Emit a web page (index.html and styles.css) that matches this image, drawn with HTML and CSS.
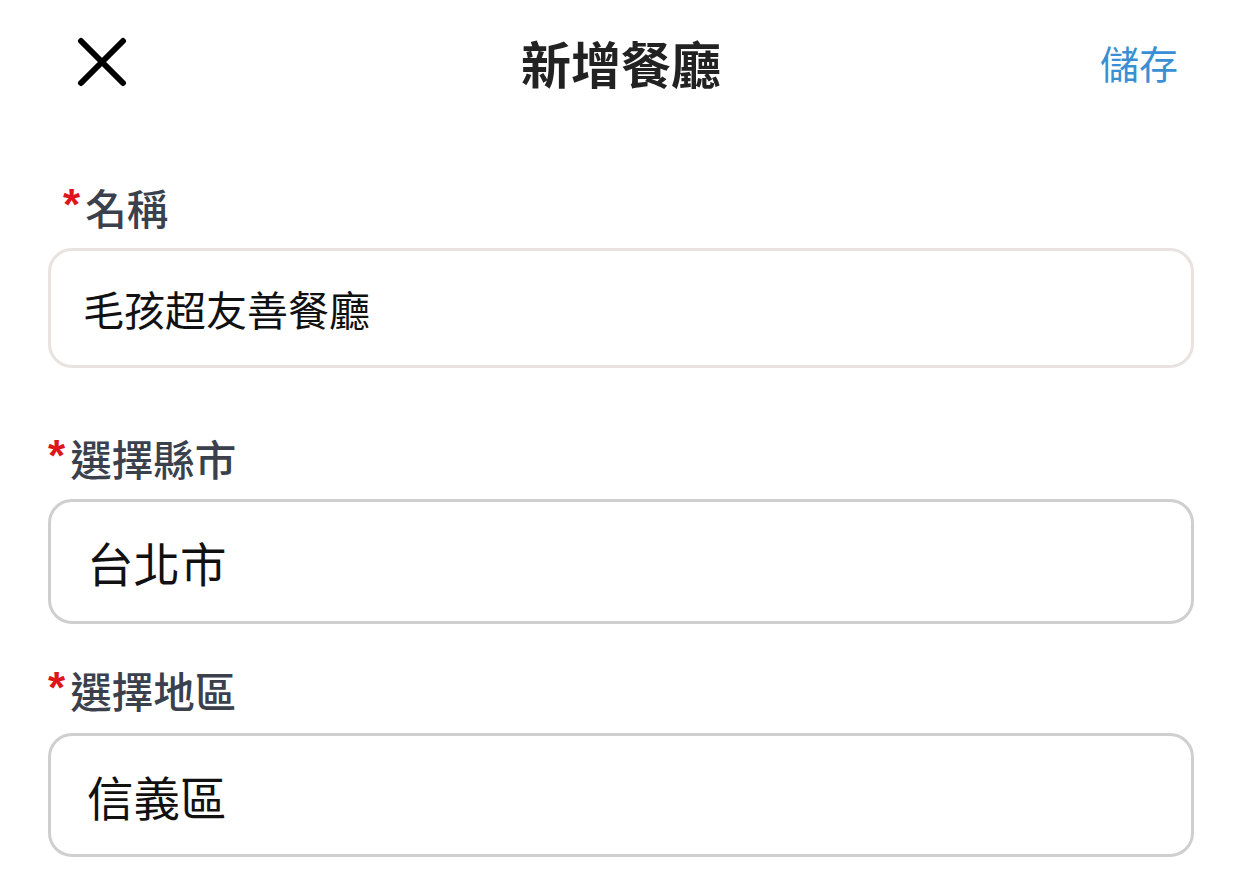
FILE: index.html
```html
<!DOCTYPE html>
<html lang="zh-Hant">
<head>
<meta charset="utf-8">
<title>新增餐廳</title>
<link rel="stylesheet" href="styles.css">
</head>
<body>
<header class="topbar">
  <button class="close" aria-label="關閉">
    <svg width="50" height="50" viewBox="0 0 50 50"><path d="M4 4 L46 46 M46 4 L4 46" stroke="#000" stroke-width="6" stroke-linecap="round" fill="none"/></svg>
  </button>
  <h1 class="title">新增餐廳</h1>
  <button class="save">儲存</button>
</header>
<main class="form">
  <div class="label label-first"><span class="req">*</span>名稱</div>
  <div class="field field-name">毛孩超友善餐廳</div>
  <div class="label label-city"><span class="req">*</span>選擇縣市</div>
  <div class="field field-select">台北市</div>
  <div class="label label-area"><span class="req">*</span>選擇地區</div>
  <div class="field field-select field-area">信義區</div>
</main>
</body>
</html>
```
FILE: styles.css
```css
* { box-sizing: border-box; }
html, body { margin: 0; padding: 0; background: #fff; }
body {
  width: 1242px;
  height: 878px;
  overflow: hidden;
  font-family: "Noto Sans CJK TC", "Noto Sans", sans-serif;
  color: #111;
}
.topbar {
  height: 124px;
  display: flex;
  align-items: center;
  justify-content: space-between;
  padding: 0 62px 0 76px;
  position: relative;
}
.close {
  border: 0;
  background: none;
  padding: 0;
  width: 52px;
  height: 52px;
  display: flex;
  align-items: center;
  justify-content: center;
}
.title {
  margin: 0;
  font-size: 50px;
  font-weight: 700;
  color: #222;
  line-height: 1;
  position: absolute;
  left: 0; right: 0;
  text-align: center;
  pointer-events: none;
}
.save {
  border: 0;
  background: none;
  padding: 0;
  font-family: inherit;
  font-size: 39px;
  color: #3a8fd4;
  line-height: 1;
  margin-right: 2px;
}
.form {
  padding: 0 48px;
}
.label {
  height: 50px;
  line-height: 50px;
  font-size: 41.5px;
  font-weight: 500;
  color: #3a404c;
  display: flex;
  align-items: center;
}
.req {
  font-family: "Liberation Sans", sans-serif;
  font-weight: 700;
  color: #e0141b;
  font-size: 44px;
  align-self: flex-start;
  line-height: 46px;
  margin-right: 5px;
}
.label-first { margin-top: 58px; padding-left: 15px; }
.label-city { margin-top: 65px; }
.label-area { margin-top: 41px; }
.field {
  margin-top: 16px;
  border-radius: 24px;
  display: flex;
  align-items: center;
}
.field-name {
  height: 120px;
  border: 3px solid #e8e2e0;
  padding-left: 32px;
  font-size: 41px;
}
.field-select {
  height: 125px;
  border: 3px solid #cfcfcf;
  padding-left: 36px;
  font-size: 46.5px;
}
.field-area { margin-top: 18px; height: 124px; }
```
